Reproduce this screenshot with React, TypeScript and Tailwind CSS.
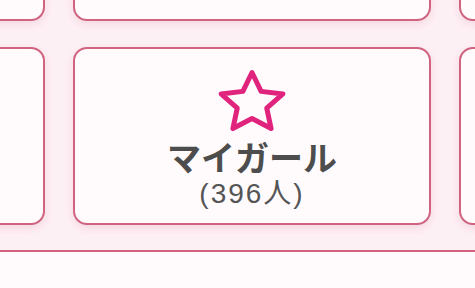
function StarIcon() {
  return (
    <svg width="72" height="64" viewBox="0 0 72 64" fill="none">
      <polygon
        points="36,3.5 45.11,22.37 66.91,24.92 50.74,39.14 55.1,59.58 36,49.5 16.9,59.58 21.26,39.14 5.09,24.92 26.89,22.37"
        stroke="#e0237c"
        strokeWidth="5"
        strokeLinejoin="round"
      />
    </svg>
  );
}

const cardCls =
  'shrink-0 w-[358px] rounded-[14px] border-2 border-[#d0637f] bg-[#fffbfd] shadow-[0_3px_8px_rgba(208,99,127,0.18)]';

function Row({ height, children }: { height: string; children?: React.ReactNode }) {
  return (
    <div className={`flex gap-[28px] -ml-[313px] ${height}`}>
      <div className={cardCls} />
      <div className={`${cardCls} flex flex-col items-center`}>{children}</div>
      <div className={cardCls} />
    </div>
  );
}

export default function App() {
  return (
    <div
      className="w-[475px] h-[288px] overflow-hidden bg-[#fdf0f5]"
      style={{ fontFamily: '"Liberation Sans", "Noto Sans CJK JP", sans-serif' }}
    >
      <div className="flex flex-col gap-[26px] -mt-[140px]">
        <Row height="h-[161px]" />
        <Row height="h-[178px]">
          <div className="mt-[20px]">
            <StarIcon />
          </div>
          <div
            className="mt-[7px] text-[34px] leading-[34px] font-bold text-[#4d4d4d]"
            style={{ fontFamily: '"Noto Sans CJK JP", sans-serif' }}
          >
            マイガール
          </div>
          <div className="mt-[5px] text-[28px] leading-[30px] tracking-[2px] text-[#555555]">(396人)</div>
        </Row>
      </div>
      <div className="mt-[25px] h-[60px] border-t-2 border-[#d0637f] bg-[#fffbfd]" />
    </div>
  );
}
